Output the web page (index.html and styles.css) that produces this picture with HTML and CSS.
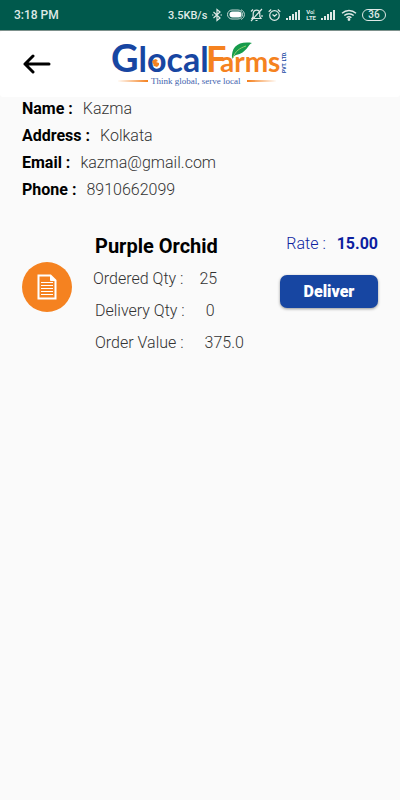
FILE: index.html
```html
<!DOCTYPE html>
<html lang="en">
<head>
  <meta charset="UTF-8">
  <meta name="viewport" content="width=device-width, initial-scale=1.0">
  <title>GlocalFarms - Order</title>
  <link rel="stylesheet" href="styles.css">
</head>
<body>

  <div class="status-bar">
    <span class="time">3:18 PM</span>
    <div class="status-icons">
      <span class="speed">3.5KB/s</span>
      <svg width="10" height="14" viewBox="0 0 10 14" fill="none" stroke="#dfe9e6" stroke-width="1.2"><path d="M1.5 4l6.5 6L5 12.500V1.500L8 4l-6.500 6"/><path d="M0 7h1.500M8.500 7H10"/></svg>
      <svg width="18" height="12" viewBox="0 0 18 12"><rect x=".5" y="1" width="15" height="9" rx="4.500" fill="none" stroke="#c5d8d3"/><rect x="2.500" y="2.500" width="12" height="6" rx="3" fill="#fff"/><path d="M14 .8c4.500 1.500 4.500 8 0 9.600" fill="none" stroke="#c5d8d3"/></svg>
      <svg width="13" height="14" viewBox="0 0 13 14" fill="none" stroke="#dfe9e6" stroke-width="1.200"><path d="M2 10.500h9L9.800 8.500V5.500C9.800 1 3.200 1 3.200 5.500v3zM5.500 12.500h2M12 1L1 13M1 3.500L3 1.500M12 7v2"/></svg>
      <svg width="13" height="14" viewBox="0 0 13 14" fill="none" stroke="#dfe9e6" stroke-width="1.200"><circle cx="6.500" cy="7.500" r="4.800"/><path d="M4.500 6.500l2 1.800L9 6M.7 3.700l2.500-2.200M12.300 3.700L9.800 1.500"/></svg>
      <svg width="15" height="12" viewBox="0 0 15 12" fill="#dfe9e6"><path d="M0 9h2v2H0zM3 7h2v4H3zM6 5h2v6H6zM9 3h2v8H9zM12 1h2v10h-2z"/></svg>
      <span class="volte"><span>Vo⁝</span><span>LTE</span></span>
      <svg width="15" height="12" viewBox="0 0 15 12" fill="#dfe9e6"><path d="M0 9h2v2H0zM3 7h2v4H3zM6 5h2v6H6zM9 3h2v8H9zM12 1h2v10h-2z"/></svg>
      <svg width="16" height="12" viewBox="0 0 16 12" fill="none" stroke="#dfe9e6" stroke-width="1.400"><path d="M1 4.200c4-3.700 10-3.700 14 0M3.300 6.600c2.700-2.500 6.700-2.500 9.400 0M5.600 8.800c1.400-1.300 3.400-1.300 4.800 0"/><circle cx="8" cy="10.500" r=".7"/></svg>
      <span class="battery">36</span>
    </div>
  </div>

  <header class="header">
    <button class="back" aria-label="Back">
      <svg width="28" height="20" viewBox="0 0 28 20" fill="none" stroke="#000" stroke-width="3" stroke-linecap="round" stroke-linejoin="round"><path d="M26 10H2M10 2L2 10l8 8"/></svg>
    </button>
    <svg class="logo" width="180" height="50" viewBox="0 0 180 50" role="img" aria-label="GlocalFarms">
      <text class="logo-blue" x="0" y="33"><tspan class="logo-cap">G</tspan>local</text>
      <!-- globe inside the o -->
      <path d="M42 21l3-1 2 2-2 1 3 1v2l-2 2-3-1-2-2 2 1-2-3z" fill="#f58220"/>
      <text class="logo-orange" y="33"><tspan class="logo-f" x="95">F</tspan><tspan x="109">arms</tspan></text>
      <path d="M121 20c-1-12 6-18 20-16-4 1-5 10-16 12-2 1-3 2-4 4z" fill="#169b4b"/>
      <path d="M122 19c2-7 7-10 13-12" fill="none" stroke="#8fd06f" stroke-width="1"/>
      <path d="M6 42l31-1v2zM136 41l30 1-30 1z" fill="#f58220"/>
      <text class="logo-tag" x="40" y="45">Think global, serve local</text>
      <text class="logo-ltd" transform="translate(175 34) rotate(-90)">PVT. LTD.</text>
    </svg>
  </header>

  <main class="content">
    <dl class="customer">
      <div class="row"><dt>Name :</dt><dd>Kazma</dd></div>
      <div class="row"><dt>Address :</dt><dd>Kolkata</dd></div>
      <div class="row"><dt>Email :</dt><dd>kazma@gmail.com</dd></div>
      <div class="row"><dt>Phone :</dt><dd>8910662099</dd></div>
    </dl>

    <section class="order">
      <div class="order-icon">
        <svg width="20" height="26" viewBox="0 0 20 26" fill="none" stroke="#fff"><path d="M1.500 1.500h12l5 5v18h-17z" stroke-width="2"/><path d="M13.500 1.500v5h5" fill="#fff"/><path d="M4 8.500h12M4 11.500h12M4 14.500h12M4 17.500h12M4 20.500h12" stroke-width="1.200"/></svg>
      </div>
      <div class="order-info">
        <h2>Purple Orchid</h2>
        <p class="qty"><span>Ordered Qty :</span><span>25</span></p>
        <p class="delivery"><span>Delivery Qty :</span><span>0</span></p>
        <p class="value"><span>Order Value :</span><span>375.0</span></p>
      </div>
      <div class="order-side">
        <p class="rate">Rate : <b>15.00</b></p>
        <button class="deliver">Deliver</button>
      </div>
    </section>
  </main>

</body>
</html>
```
FILE: styles.css
```css
* {
  box-sizing: border-box;
}

body {
  margin: 0;
  min-height: 100vh;
  background: #fafafa;
  color: #333;
  font-family: Roboto, sans-serif;
  font-size: 16px;
  font-weight: 300;
}

p,
dl,
dd,
h2 {
  margin: 0;
}

/* Status bar */
.status-bar {
  display: flex;
  align-items: center;
  justify-content: space-between;
  height: 31px;
  padding: 0 14px;
  background: #00594c;
  border-bottom: 1px solid #7d918c;
  color: #dfe9e6;
  font-weight: 500;
}

.time {
  font-size: 12px;
}

.status-icons {
  display: flex;
  align-items: center;
  gap: 5px;
}

.speed {
  font-size: 11px;
}

.volte {
  display: flex;
  flex-direction: column;
  font-size: 6px;
  font-weight: 700;
  line-height: 6px;
}

.battery {
  width: 24px;
  border: 1px solid #dfe9e6;
  border-radius: 6px;
  font-size: 10px;
  line-height: 10px;
  text-align: center;
}

/* Header */
.header {
  display: flex;
  align-items: center;
  gap: 60px;
  height: 66px;
  padding: 0 23px;
  background: #fff;
  border-radius: 3px;
}

.back {
  display: flex;
  padding: 0;
  border: none;
  background: none;
  cursor: pointer;
}

.logo {
  flex: none;
}

.logo-blue,
.logo-orange {
  font-family: Lato, sans-serif;
  font-weight: 700;
}

.logo-blue {
  fill: #1746a2;
  font-size: 34px;
}

.logo-cap {
  font-size: 38px;
}

.logo-orange {
  fill: #f58220;
  font-size: 28px;
}

.logo-f {
  font-size: 36px;
}

.logo-tag {
  fill: #4263ae;
  font-family: "Liberation Serif", serif;
  font-size: 9px;
  font-weight: 400;
}

.logo-ltd {
  fill: #1746a2;
  font-size: 5px;
  font-weight: 700;
}

/* Customer details */
.content {
  padding: 0 22px;
}

.customer {
  margin-top: -2px;
}

.row {
  display: flex;
  gap: 10px;
  line-height: 27px;
}

.row dt {
  color: #000;
  font-weight: 700;
}

/* Order */
.order {
  display: flex;
  margin-top: 29px;
}

.order-icon {
  display: flex;
  align-items: center;
  justify-content: center;
  width: 50px;
  height: 50px;
  margin-top: 30px;
  border-radius: 50%;
  background: #f58220;
}

.order-info {
  flex: 1;
  padding-left: 23px;
}

.order-info h2 {
  margin-bottom: 3px;
  color: #000;
  font-size: 20px;
  font-weight: 700;
  line-height: 28px;
}

.order-info p {
  display: flex;
  line-height: 32px;
}

.order-info .qty {
  gap: 16px;
  margin-left: -2px;
}

.delivery,
.value {
  gap: 21px;
}

.order-side {
  display: flex;
  flex-direction: column;
  align-items: flex-end;
  gap: 19px;
}

.rate {
  color: #0d1fa0;
  line-height: 24px;
}

.rate b {
  margin-left: 7px;
  font-weight: 700;
}

.deliver {
  width: 98px;
  height: 33px;
  border: none;
  border-radius: 7px;
  background: #1746a2;
  box-shadow: 0 1px 3px rgba(0, 0, 0, 0.4);
  color: #fff;
  font-family: Roboto, sans-serif;
  font-size: 16px;
  font-weight: 900;
  cursor: pointer;
}
```
